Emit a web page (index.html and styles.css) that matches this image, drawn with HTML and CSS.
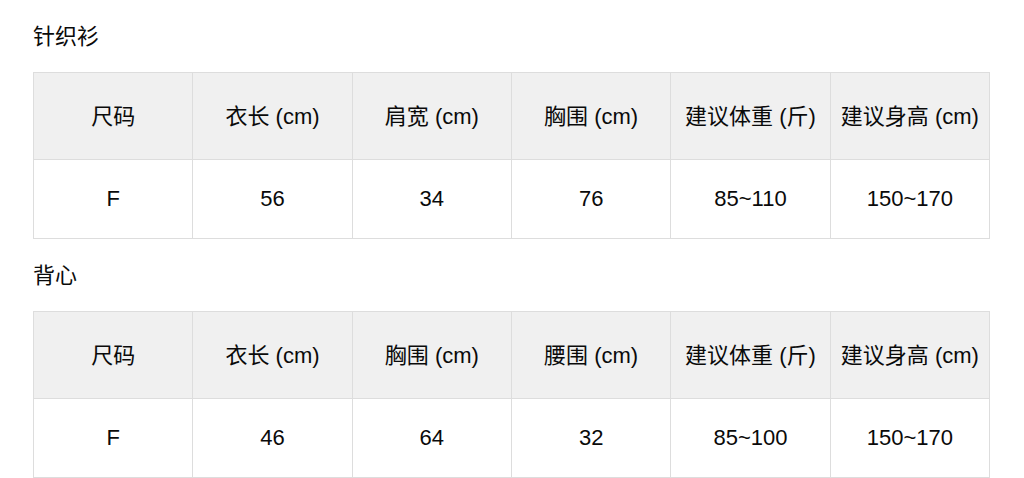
FILE: index.html
```html
<!DOCTYPE html>
<html lang="zh">
<head>
<meta charset="utf-8">
<link rel="stylesheet" href="styles.css">
</head>
<body>
<div class="page">
  <h2 class="title">针织衫</h2>
  <table class="size-table">
    <thead>
      <tr><th>尺码</th><th>衣长 (cm)</th><th>肩宽 (cm)</th><th>胸围 (cm)</th><th>建议体重 (斤)</th><th>建议身高 (cm)</th></tr>
    </thead>
    <tbody>
      <tr><td>F</td><td>56</td><td>34</td><td>76</td><td>85~110</td><td>150~170</td></tr>
    </tbody>
  </table>
  <h2 class="title title-second">背心</h2>
  <table class="size-table">
    <thead>
      <tr><th>尺码</th><th>衣长 (cm)</th><th>胸围 (cm)</th><th>腰围 (cm)</th><th>建议体重 (斤)</th><th>建议身高 (cm)</th></tr>
    </thead>
    <tbody>
      <tr><td>F</td><td>46</td><td>64</td><td>32</td><td>85~100</td><td>150~170</td></tr>
    </tbody>
  </table>
</div>
</body>
</html>
```

FILE: styles.css
```css
html, body {
  margin: 0;
  padding: 0;
  background: #ffffff;
}
body {
  font-family: "Liberation Sans", "Noto Sans CJK SC", sans-serif;
  color: #0a0a0a;
}
.page {
  padding: 14px 34px 0 33px;
}
.title {
  margin: 0;
  font-size: 22px;
  font-weight: 400;
  line-height: 40px;
  font-family: "Noto Sans CJK SC", sans-serif;
}
.title-second {
  margin-top: 14px;
}
.size-table {
  margin-top: 18px;
  width: 957px;
  border-collapse: collapse;
  table-layout: fixed;
}
.size-table th,
.size-table td {
  border: 1px solid #dddddd;
  text-align: center;
  font-size: 22px;
  font-weight: 400;
  padding: 0;
}
.size-table th {
  background: #f0f0f0;
  height: 82px;
  padding-bottom: 4px;
}
.size-table td {
  height: 77px;
  padding-bottom: 1px;
}
```
